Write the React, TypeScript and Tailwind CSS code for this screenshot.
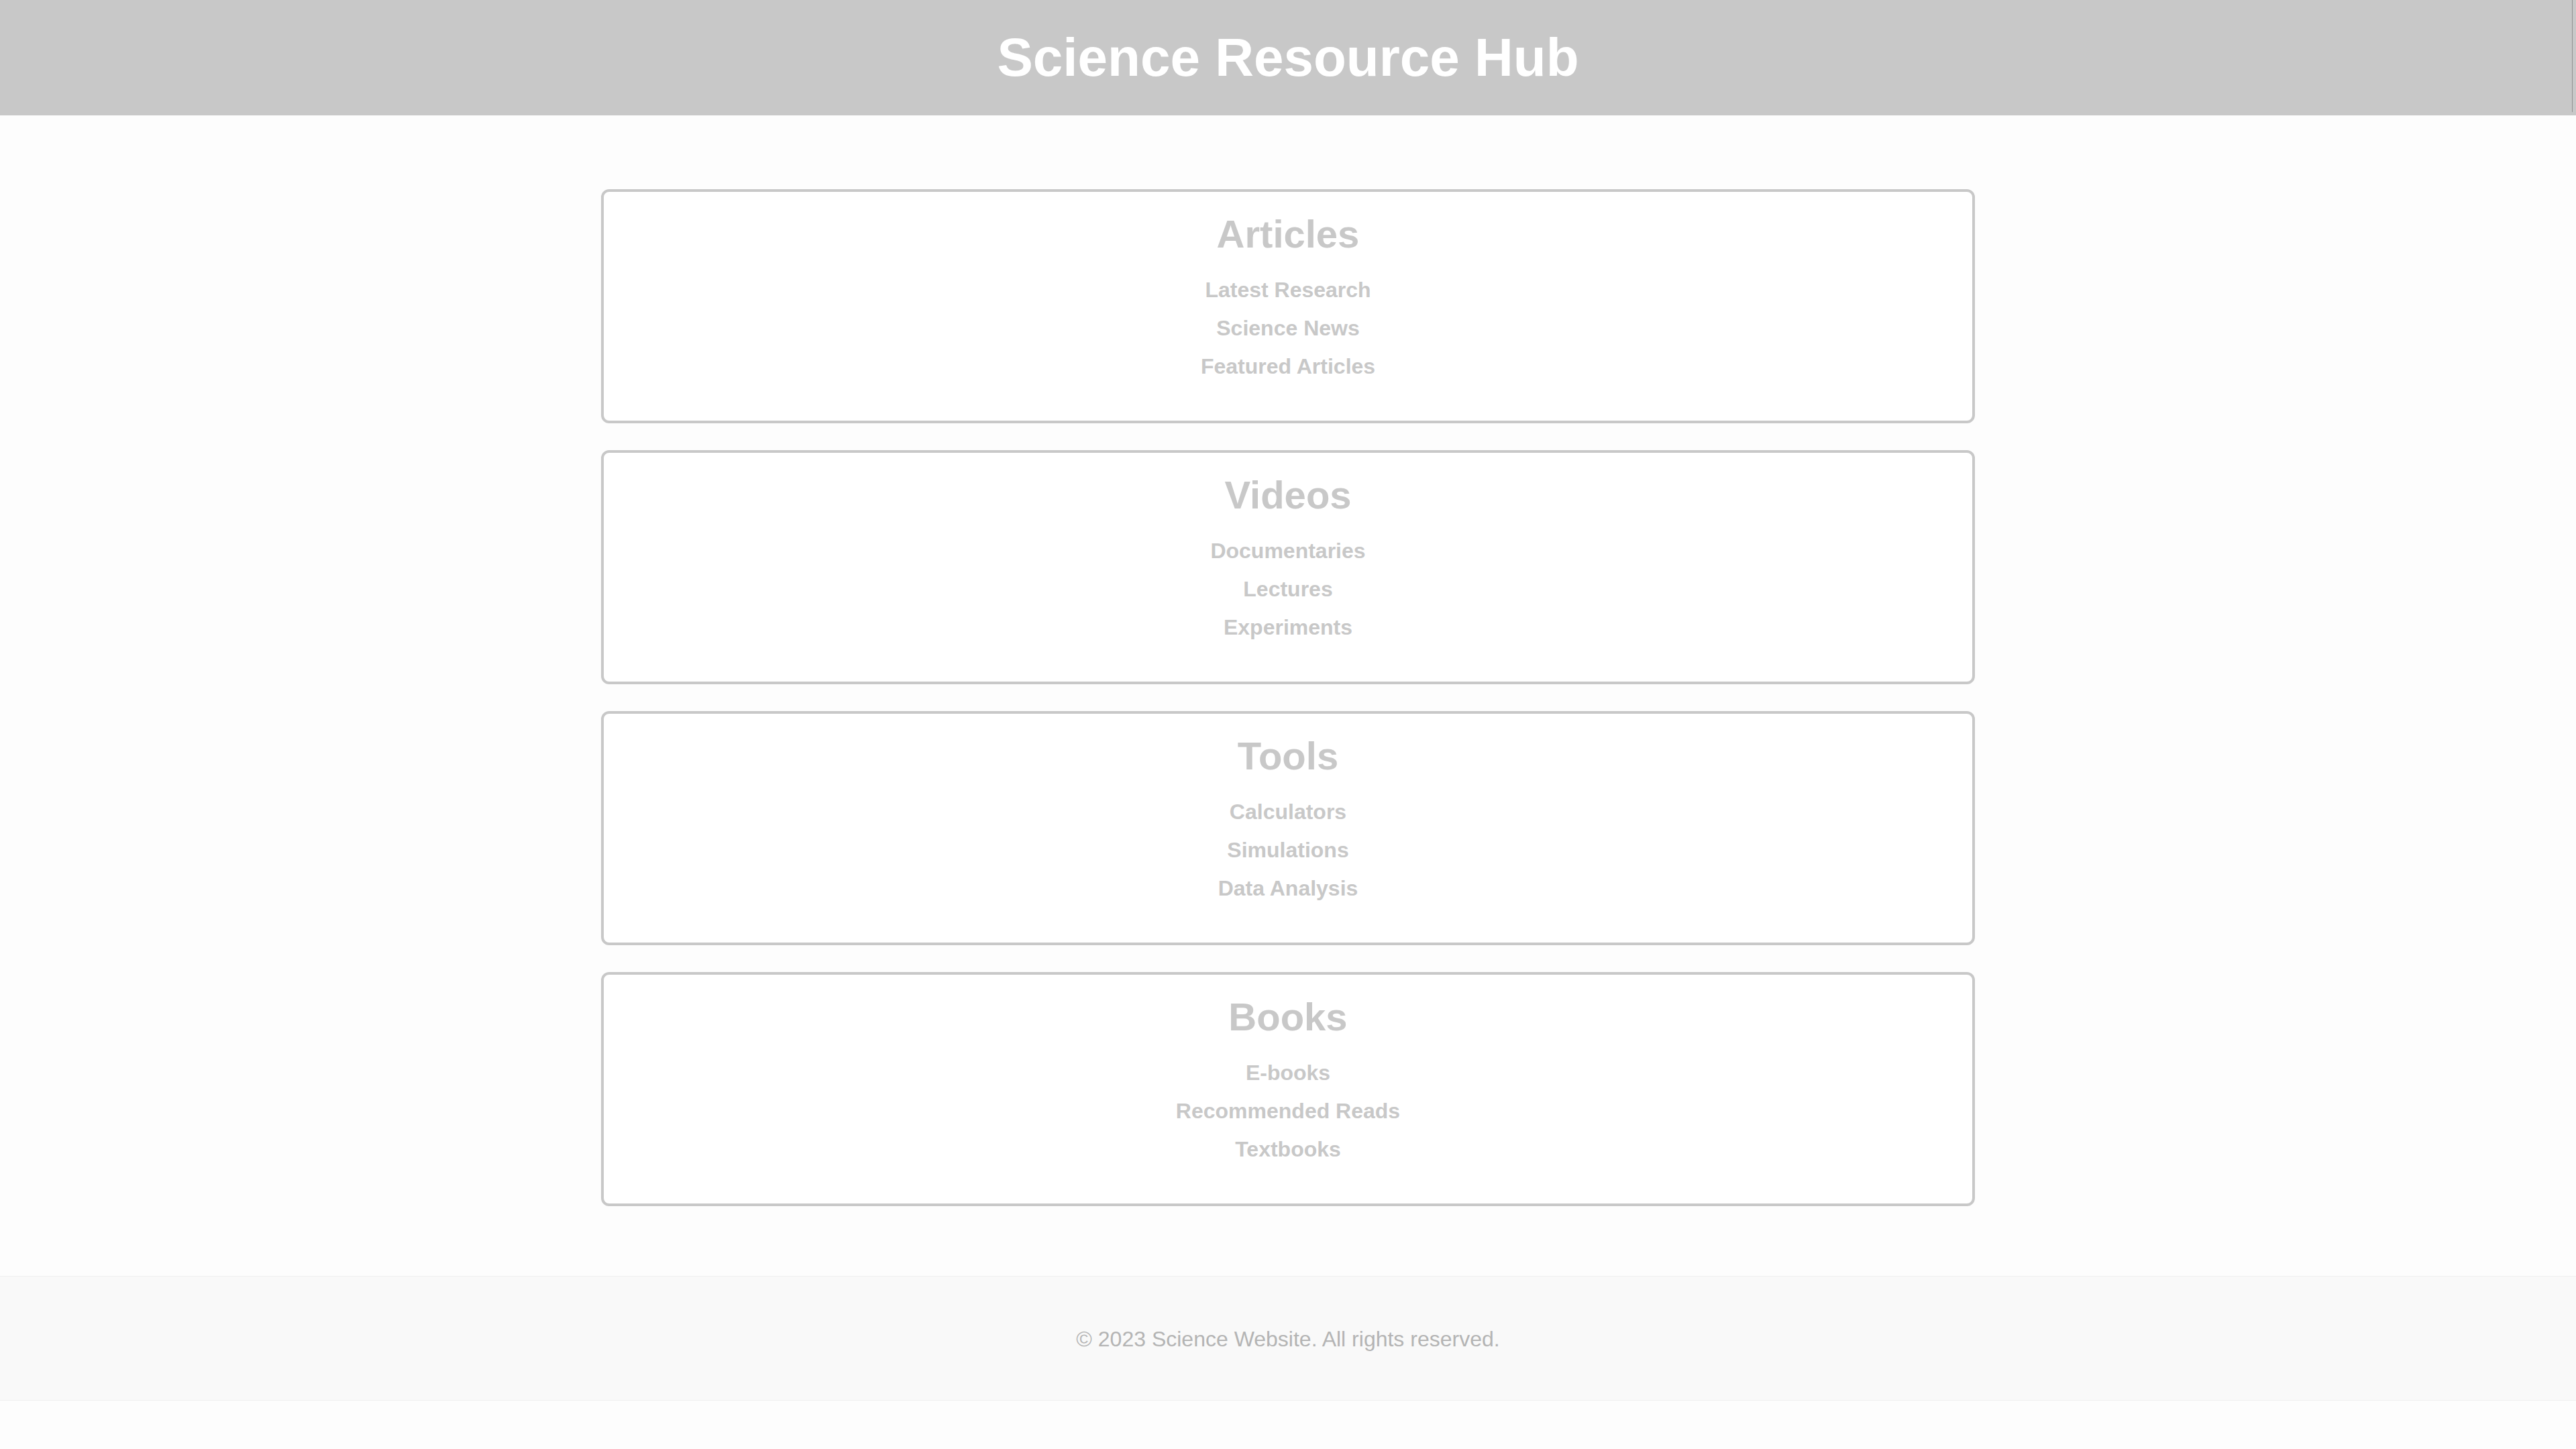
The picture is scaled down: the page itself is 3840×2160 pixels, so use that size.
const SECTIONS = [
  { title: "Articles", links: ["Latest Research", "Science News", "Featured Articles"] },
  { title: "Videos", links: ["Documentaries", "Lectures", "Experiments"] },
  { title: "Tools", links: ["Calculators", "Simulations", "Data Analysis"] },
  { title: "Books", links: ["E-books", "Recommended Reads", "Textbooks"] },
];

function SectionCard({ title, links }: { title: string; links: string[] }) {
  return (
    <section className="h-[349px] rounded-[12px] border-[4px] border-[#c8c8c8] bg-white pt-[30px] text-center">
      <h2 className="text-[58px] leading-[66px] font-bold text-[#c8c8c8]">{title}</h2>
      <ul className="mt-[32px] flex flex-col gap-[20px]">
        {links.map((l) => (
          <li key={l}>
            <a className="text-[32px] leading-[37px] font-bold text-[#c8c8c8]">{l}</a>
          </li>
        ))}
      </ul>
    </section>
  );
}

export default function App() {
  return (
    <div
      className="min-h-[2160px] bg-[#fdfdfd] flex flex-col"
      style={{ fontFamily: '"Liberation Sans", Arial, sans-serif' }}
    >
      {/* header */}
      <header className="relative h-[172px] bg-[#c8c8c8] flex items-center justify-center">
        <h1 className="text-[80px] leading-[92px] font-bold text-white">Science Resource Hub</h1>
        <span className="absolute right-[5px] top-0 h-[167px] w-px bg-[#929292]" />
      </header>

      {/* sections */}
      <main className="pt-[110px]">
        <div className="mx-auto w-[2048px] flex flex-col gap-[40px]">
          {SECTIONS.map((s) => (
            <SectionCard key={s.title} title={s.title} links={s.links} />
          ))}
        </div>
      </main>

      {/* footer */}
      <footer className="mt-[104px] h-[186px] bg-[#f9f9f9] border-t border-b border-[#efefef] flex items-center justify-center pt-[3px]">
        <p className="text-[32px] leading-[37px] text-[#b4b4b4]">© 2023 Science Website. All rights reserved.</p>
      </footer>
    </div>
  );
}
